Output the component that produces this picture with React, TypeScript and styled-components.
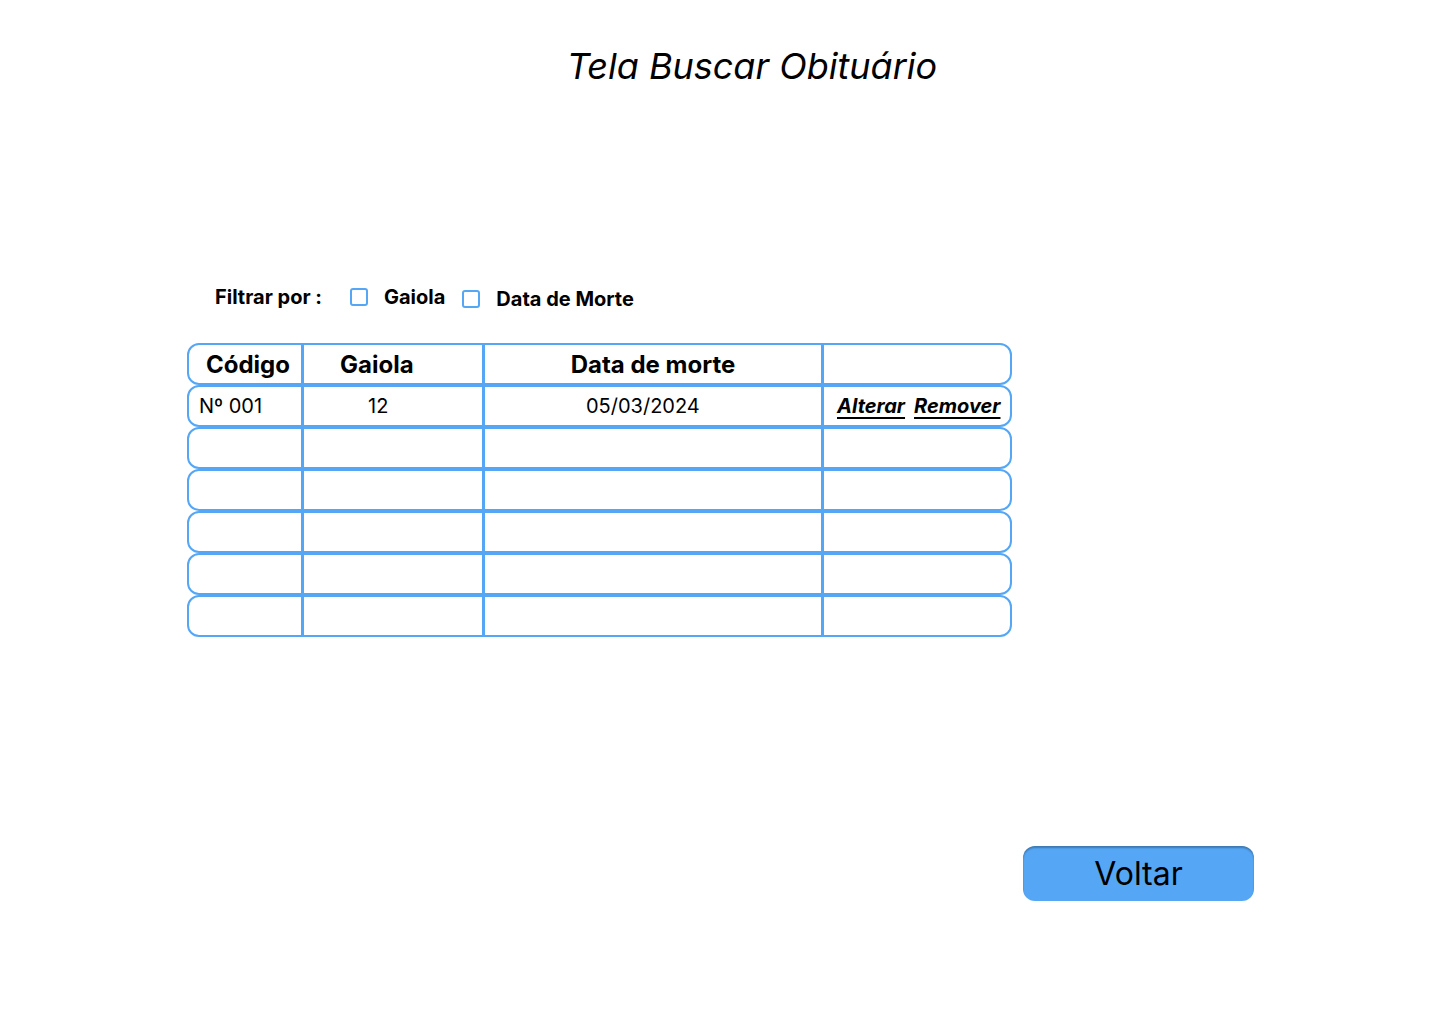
import React from 'react';
import styled, { createGlobalStyle } from 'styled-components';

const BLUE = '#55a7f5';

const GlobalStyle = createGlobalStyle`
  body {
    margin: 0;
    background: #ffffff;
    font-family: Inter, "Noto Sans", sans-serif;
    color: #000;
  }
`;

interface Row {
  codigo: string;
  gaiola: string;
  data: string;
  actions: boolean;
}

const rows: Row[] = [
  { codigo: 'Nº 001', gaiola: '12', data: '05/03/2024', actions: true },
  { codigo: '', gaiola: '', data: '', actions: false },
  { codigo: '', gaiola: '', data: '', actions: false },
  { codigo: '', gaiola: '', data: '', actions: false },
  { codigo: '', gaiola: '', data: '', actions: false },
  { codigo: '', gaiola: '', data: '', actions: false },
];

export default function App() {
  return (
    <Page>
      <GlobalStyle />
      <Title>Tela Buscar Obituário</Title>

      <FilterBar>
        <FilterLabel>Filtrar por :</FilterLabel>
        <CheckOption>
          <CheckBox />
          <span>Gaiola</span>
        </CheckOption>
        <CheckOption $low>
          <CheckBox />
          <span>Data de Morte</span>
        </CheckOption>
      </FilterBar>

      <Table>
        <TableRow>
          <HeadCell $pad={17}>Código</HeadCell>
          <HeadCell $pad={36}>Gaiola</HeadCell>
          <HeadCell $center>Data de morte</HeadCell>
          <HeadCell />
        </TableRow>
        {rows.map((r, i) => (
          <TableRow key={i}>
            <Cell $pad={10}>{r.codigo}</Cell>
            <Cell $pad={64}>{r.gaiola}</Cell>
            <Cell $pad={101}>{r.data}</Cell>
            <Cell $pad={13}>
              {r.actions && (
                <>
                  <ActionLink>Alterar</ActionLink>
                  <ActionLink>Remover</ActionLink>
                </>
              )}
            </Cell>
          </TableRow>
        ))}
      </Table>

      <Footer>
        <BackButton type="button">Voltar</BackButton>
      </Footer>
    </Page>
  );
}

const Page = styled.div`
  width: 1440px;
  min-height: 1024px;
  padding-top: 44px;
  box-sizing: border-box;
`;

const Title = styled.h1`
  margin: 0;
  padding-left: 64px;
  text-align: center;
  font-size: 36px;
  font-weight: 400;
  font-style: italic;
  line-height: 44px;
`;

const FilterBar = styled.div`
  display: flex;
  align-items: center;
  margin: 197px 0 0 215px;
  height: 24px;
  font-size: 20px;
  font-weight: 700;
`;

const FilterLabel = styled.span`
  margin-right: 28px;
`;

const CheckOption = styled.label<{ $low?: boolean }>`
  display: flex;
  align-items: center;
  gap: 16px;
  margin-right: 17px;
  transform: translateY(${(p) => (p.$low ? '2px' : '0')});
`;

const CheckBox = styled.span`
  width: 14px;
  height: 14px;
  border: 2px solid ${BLUE};
  border-radius: 3px;
  background: #fff;
`;

const Table = styled.div`
  width: 825px;
  margin: 34px 0 0 187px;
  display: flex;
  flex-direction: column;
`;

const TableRow = styled.div`
  display: grid;
  grid-template-columns: 112px 181px 339px 1fr;
  height: 42px;
  box-sizing: border-box;
  border: 2px solid ${BLUE};
  border-radius: 12px;
`;

const Cell = styled.div<{ $pad?: number; $center?: boolean }>`
  display: flex;
  align-items: center;
  gap: 9px;
  justify-content: ${(p) => (p.$center ? 'center' : 'flex-start')};
  padding-left: ${(p) => (p.$pad ? `${p.$pad}px` : '0')};
  font-size: 20px;
  white-space: nowrap;
  & + & {
    border-left: 3px solid ${BLUE};
  }
`;

const HeadCell = styled(Cell)`
  font-size: 24px;
  font-weight: 700;
`;

const ActionLink = styled.a`
  font-weight: 700;
  font-style: italic;
  text-decoration: underline;
  text-underline-offset: 4px;
  cursor: pointer;
`;

const Footer = styled.div`
  display: flex;
  margin: 209px 0 0 1023px;
`;

const BackButton = styled.button`
  width: 231px;
  height: 55px;
  border: none;
  border-radius: 12px;
  background: ${BLUE};
  box-shadow: inset 0 2px 2px rgba(0, 0, 0, 0.28);
  font-family: Inter, "Noto Sans", sans-serif;
  font-size: 32px;
  color: #000;
  cursor: pointer;
`;
